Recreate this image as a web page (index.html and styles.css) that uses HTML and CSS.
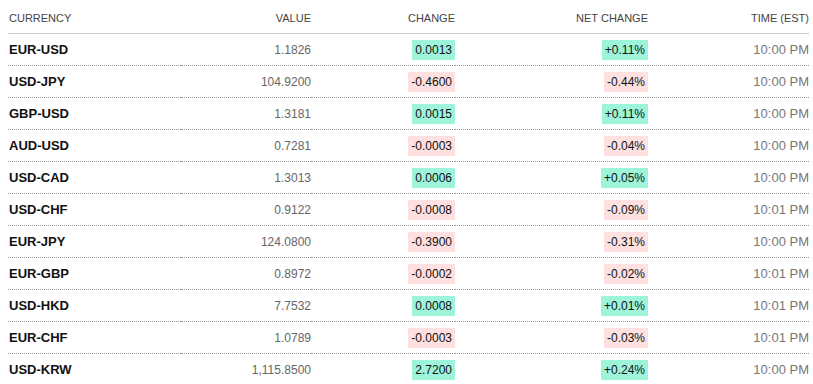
FILE: index.html
```html
<!DOCTYPE html>
<html lang="en">
<head>
  <meta charset="UTF-8" />
  <title>Currencies</title>
  <link rel="stylesheet" href="styles.css">
</head>
<body>
  <table class="rates">
    <thead>
      <tr>
        <th class="name">Currency</th>
        <th>Value</th>
        <th>Change</th>
        <th>Net Change</th>
        <th>Time (EST)</th>
      </tr>
    </thead>
    <tbody>
      <tr><td class="name">EUR-USD</td><td class="value">1.1826</td><td><span class="up">0.0013</span></td><td><span class="up">+0.11%</span></td><td class="time">10:00 PM</td></tr>
      <tr><td class="name">USD-JPY</td><td class="value">104.9200</td><td><span class="down">-0.4600</span></td><td><span class="down">-0.44%</span></td><td class="time">10:00 PM</td></tr>
      <tr><td class="name">GBP-USD</td><td class="value">1.3181</td><td><span class="up">0.0015</span></td><td><span class="up">+0.11%</span></td><td class="time">10:00 PM</td></tr>
      <tr><td class="name">AUD-USD</td><td class="value">0.7281</td><td><span class="down">-0.0003</span></td><td><span class="down">-0.04%</span></td><td class="time">10:00 PM</td></tr>
      <tr><td class="name">USD-CAD</td><td class="value">1.3013</td><td><span class="up">0.0006</span></td><td><span class="up">+0.05%</span></td><td class="time">10:00 PM</td></tr>
      <tr><td class="name">USD-CHF</td><td class="value">0.9122</td><td><span class="down">-0.0008</span></td><td><span class="down">-0.09%</span></td><td class="time">10:01 PM</td></tr>
      <tr><td class="name">EUR-JPY</td><td class="value">124.0800</td><td><span class="down">-0.3900</span></td><td><span class="down">-0.31%</span></td><td class="time">10:00 PM</td></tr>
      <tr><td class="name">EUR-GBP</td><td class="value">0.8972</td><td><span class="down">-0.0002</span></td><td><span class="down">-0.02%</span></td><td class="time">10:01 PM</td></tr>
      <tr><td class="name">USD-HKD</td><td class="value">7.7532</td><td><span class="up">0.0008</span></td><td><span class="up">+0.01%</span></td><td class="time">10:01 PM</td></tr>
      <tr><td class="name">EUR-CHF</td><td class="value">1.0789</td><td><span class="down">-0.0003</span></td><td><span class="down">-0.03%</span></td><td class="time">10:01 PM</td></tr>
      <tr><td class="name">USD-KRW</td><td class="value">1,115.8500</td><td><span class="up">2.7200</span></td><td><span class="up">+0.24%</span></td><td class="time">10:00 PM</td></tr>
    </tbody>
  </table>
</body>
</html>
```

FILE: styles.css
```css
html, body {
  margin: 0;
  padding: 0;
  background: #fff;
  font-family: 'Liberation Sans', Arial, sans-serif;
  color: #111;
}

.rates {
  margin-left: 8px;
  width: 800px;
  border-collapse: collapse;
  table-layout: fixed;
}

.rates th:nth-child(1) { width: 172px; }
.rates th:nth-child(2) { width: 130px; }
.rates th:nth-child(3) { width: 144px; }
.rates th:nth-child(4) { width: 193px; }
.rates th:nth-child(5) { width: 161px; }

.rates th {
  height: 31px;
  padding: 2px 0 0;
  font-size: 11px;
  font-weight: 400;
  text-transform: uppercase;
  color: #444;
  text-align: right;
  border-bottom: 1px solid #c8c8c8;
}

.rates td {
  height: 31px;
  padding: 0;
  text-align: right;
  border-bottom: 1px dotted #9a9a9a;
  vertical-align: middle;
}

.rates tbody tr:last-child td {
  border-bottom: none;
}

.rates .name {
  text-align: left;
  padding-left: 1px;
}

td.name {
  font-size: 13px;
  font-weight: 700;
  color: #111;
}

.value {
  font-size: 12px;
  color: #666;
}

.time {
  font-size: 13px;
  color: #777;
}

.up, .down {
  display: inline-block;
  font-size: 12px;
  line-height: 20px;
  padding: 0 3px;
  color: #111;
}

.up {
  background: #9df4da;
}

.down {
  background: #fee0e0;
}
```
